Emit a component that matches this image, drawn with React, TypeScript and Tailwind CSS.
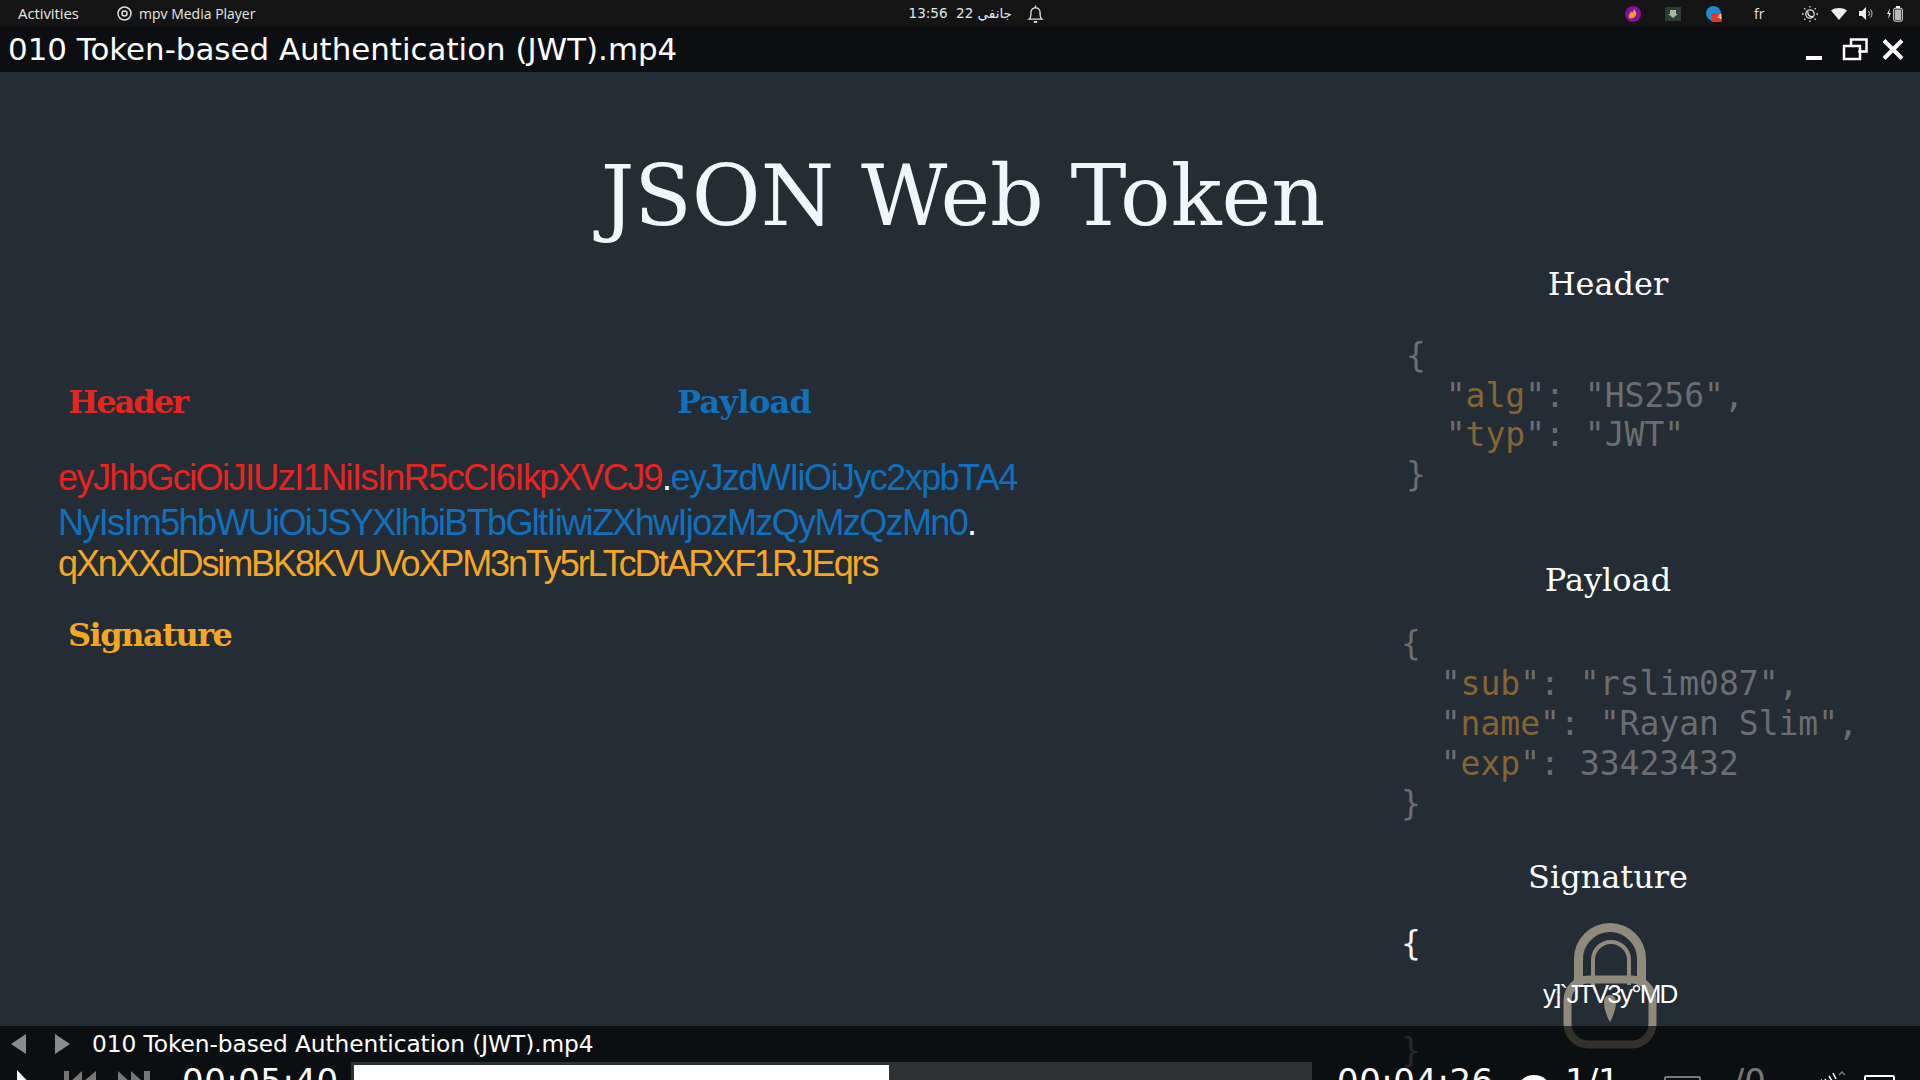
import React from "react";

const mono = "font-['DejaVu_Sans_Mono',monospace]";
const serif = "font-['DejaVu_Serif',serif]";
const sans = "font-['Liberation_Sans',sans-serif]";
const dv = "font-['DejaVu_Sans',sans-serif]";

function K({ children }: { children: React.ReactNode }) {
  return <span className="text-[#846534]">{children}</span>;
}

function Line({ children }: { children: React.ReactNode }) {
  return <div className="whitespace-pre">{children}</div>;
}

function Tray() {
  return (
    <div className="flex items-center">
      <svg width="16" height="16" viewBox="0 0 16 16" className="mr-[24px]">
        <circle cx="8" cy="8" r="8" fill="#8a0e9c" />
        <path d="M4 12c-1-3 1-4 2-7 1 1 1 2 1 2 1-2 2-3 2-4 1 2 3 3 2 6-1 3-5 4-7 3z" fill="#f79a2a" />
      </svg>
      <svg width="16" height="14" viewBox="0 0 16 14" className="mr-[25px]">
        <rect width="16" height="14" fill="#2c3d33" />
        <path d="M5 3h6v4h2l-5 4-5-4h2z" fill="#a9b79f" />
      </svg>
      <div className="relative w-[15px] h-[15px] rounded-full bg-[#1f8ad6] mr-[33px]">
        <div className="absolute right-[-1px] bottom-[-1px] w-[11px] h-[9px] rounded-[2px] bg-[#e0382f] text-[7px] leading-[9px] text-white text-right font-['DejaVu_Sans',sans-serif]">4</div>
      </div>
      <span className="text-[14px] text-[#e4e4e4] w-[12px] mr-[36px] font-['Open_Sans',sans-serif] leading-none">fr</span>
      <svg width="16" height="16" viewBox="0 0 16 16" className="mr-[13px]" fill="none" stroke="#ddd" strokeWidth="1.3">
        <circle cx="8" cy="8" r="4.2" />
        <path d="M6 5.5a4 4 0 0 0 5 5 4.2 4.2 0 0 1-5-5z" fill="#ddd" />
        <path d="M8 0v1.6M8 14.4V16M0 8h1.6M14.4 8H16M2.3 2.3l1.1 1.1M12.6 12.6l1.1 1.1M2.3 13.7l1.1-1.1M12.6 3.4l1.1-1.1" />
      </svg>
      <svg width="16" height="12" viewBox="0 0 16 12" className="mr-[12px]">
        <path d="M0 2.5C4-.8 12-.8 16 2.5L8 12z" fill="#eee" />
      </svg>
      <svg width="15" height="13" viewBox="0 0 15 13" className="mr-[12px]" fill="none">
        <path d="M0 4h3l4-4v13l-4-4H0z" fill="#eee" />
        <path d="M9.5 4a3.5 3.5 0 0 1 0 5M11.5 2.5a6 6 0 0 1 0 8" stroke="#ccc" />
      </svg>
      <svg width="17" height="16" viewBox="0 0 17 16" className="mr-[17px]" fill="none">
        <path d="M4 2 1 8h2l-1 5 3-6H3z" fill="#eee" />
        <rect x="7.7" y="2.2" width="8.6" height="13" rx="1.5" stroke="#eee" />
        <rect x="10" y="0" width="4" height="2" fill="#eee" />
        <rect x="9" y="3.5" width="6" height="10.5" fill="#bbb" />
      </svg>
    </div>
  );
}

function TopBar() {
  return (
    <div className="h-[27px] shrink-0 bg-[#141414] flex items-center relative text-[#e6e6e6] font-['Open_Sans',sans-serif]">
      <span className="ml-[18px] w-[99px] text-[15px] tracking-[-0.1px]">Activities</span>
      <svg width="15" height="15" viewBox="0 0 15 15" className="mr-[7px]" fill="none" stroke="#ddd">
        <circle cx="7.5" cy="7.5" r="6.5" strokeWidth="1.5" />
        <circle cx="7.5" cy="7.5" r="2.5" strokeWidth="1.5" />
      </svg>
      <span className="text-[14px]">mpv Media Player</span>
      <div className="flex-1 flex items-center justify-center">
        <div className="flex items-center ml-[72px]">
          <span className="text-[13.5px] text-[#dfe8f0] font-['DejaVu_Sans',sans-serif] tracking-[-0.95px] whitespace-nowrap">13:56&nbsp; 22 <span dir="rtl">جانفي</span></span>
          <svg width="17" height="20" viewBox="0 0 15 17" className="ml-[15px]" fill="none" stroke="#ddd" strokeWidth="1.2">
            <path d="M2 13c1.5-1 1.5-3 1.5-6a4 4 0 0 1 8 0c0 3 0 5 1.500 6z" />
            <path d="M6 15.500h3" strokeWidth="1.600" />
            <path d="M7.500 1v2" />
          </svg>
        </div>
      </div>
      <Tray />
    </div>
  );
}

function TitleBar() {
  return (
    <div className={`h-[45px] shrink-0 bg-[#0c0e12] flex items-center pl-[8px] pr-[15px] text-white ${dv}`}>
      <span className="text-[30.900px] leading-none flex-1 whitespace-nowrap">010 Token-based Authentication (JWT).mp4</span>
      <svg width="99" height="24" viewBox="-3 0 99 24" fill="none" stroke="#fff">
        <path d="M-3 20h16" strokeWidth="4" />
        <path d="M42 7V1.500h15.500v12h-7" strokeWidth="2.500" strokeLinecap="square" />
        <rect x="35" y="8" width="16" height="13" strokeWidth="2.500" />
        <path d="M75 2.500 93 20.500M93 2.500 75 20.500" strokeWidth="4" />
      </svg>
    </div>
  );
}

function Lock() {
  return (
    <svg width="104" height="130" viewBox="0 0 104 130" fill="none" stroke="#8f8a7c" className="absolute left-[157px] top-[-1px]">
      <path d="M20.5 62V36a31.5 31.5 0 0 1 63 0v26" strokeWidth="9" />
      <path d="M35 62V37a18 18 0 0 1 36 0v25" strokeWidth="4" />
      <rect x="9.500" y="56.500" width="85" height="65" rx="21" strokeWidth="8" />
      <path d="M52 72c5 0 6 4 6 8 0 6-4 16-6 19-2-3-6-13-6-19 0-4 1-8 6-8z" fill="#8f8a7c" stroke="none" />
    </svg>
  );
}

const heading = `${serif} text-[32px] leading-[42px] text-white text-center ml-[-8px]`;

function RightColumn() {
  return (
    <div className={`w-[406px] shrink-0 relative ${mono} text-[33px] leading-[40px] text-[#6a6e72]`}>
      <h2 className={`${heading} mt-[-23px]`}>Header</h2>
      <div className="ml-[-3px] mt-[31px] leading-[39.500px]">
        <Line>{"{"}</Line>
        <Line>{"  \""}<K>alg</K>{"\": \"HS256\","}</Line>
        <Line>{"  \""}<K>typ</K>{"\": \"JWT\""}</Line>
        <Line>{"}"}</Line>
      </div>
      <h2 className={`${heading} mt-[65px]`}>Payload</h2>
      <div className="ml-[-8px] mt-[23px]">
        <Line>{"{"}</Line>
        <Line>{"  \""}<K>sub</K>{"\": \"rslim087\","}</Line>
        <Line>{"  \""}<K>name</K>{"\": \"Rayan Slim\","}</Line>
        <Line>{"  \""}<K>exp</K>{"\": 33423432"}</Line>
        <Line>{"}"}</Line>
      </div>
      <h2 className={`${heading} mt-[32px]`}>Signature</h2>
      <div className="relative ml-[-8px] mt-[26px]">
        <Lock />
        <div className="relative text-[#f2f2f2]">{"{"}</div>
        <div className="relative mt-[67px]">{"}"}</div>
        <span className={`absolute left-[142px] top-[55px] text-[26px] leading-[30px] text-white tracking-[-1.8px] whitespace-nowrap ${sans}`}>{"y]`JTV3y°MD"}</span>
      </div>
    </div>
  );
}

function LeftColumn() {
  return (
    <div className="w-[1000px] pl-[58px] pt-[96px] shrink-0">
      <div className={`flex ${serif} font-bold text-[32px] leading-[40px]`}>
        <span className="text-[#e8241f] ml-[10px] w-[609px] tracking-[-2px]">Header</span>
        <span className="text-[#1170bd] tracking-[-0.7px]">Payload</span>
      </div>
      <div className={`${sans} text-[36px] mt-[35px] whitespace-nowrap`}>
        <div className="leading-[42px] tracking-[-1.56px]">
          <span className="text-[#e8241f]">eyJhbGciOiJIUzI1NiIsInR5cCI6IkpXVCJ9</span>
          <span className="text-white">.</span>
          <span className="text-[#1170bd]">eyJzdWIiOiJyc2xpbTA4</span>
        </div>
        <div className="leading-[42px] mt-[3px] tracking-[-1.63px]">
          <span className="text-[#1170bd]">NyIsIm5hbWUiOiJSYXlhbiBTbGltIiwiZXhwIjozMzQyMzQzMn0</span>
          <span className="text-white">.</span>
        </div>
        <div className="leading-[42px] text-[#f5a623] mt-[-1px] tracking-[-2.1px]">qXnXXdDsimBK8KVUVoXPM3nTy5rLTcDtARXF1RJEqrs</div>
      </div>
      <div className={`${serif} font-bold text-[32px] leading-[40px] tracking-[-1.5px] text-[#f5a623] ml-[10px] mt-[30px]`}>Signature</div>
    </div>
  );
}

function Slide() {
  return (
    <div className="flex-1 min-h-0 bg-[#242c35] flex flex-col">
      <h1 className={`${serif} text-[84px] leading-[96px] text-[#eff6ff] text-center mt-[76px] ml-[6px] shrink-0`}>JSON Web Token</h1>
      <div className="flex justify-between items-start pr-[105px] pt-[42px]">
        <LeftColumn />
        <RightColumn />
      </div>
    </div>
  );
}

function Controls() {
  return (
    <div className={`relative z-10 h-[54px] shrink-0 overflow-hidden bg-black/65 ${dv} text-white`}>
      <div className="h-[36px] flex items-center">
        <svg width="60" height="20" viewBox="0 0 60 20" fill="#8b8b8b" className="ml-[11px] mr-[21px]">
          <path d="M0 10 15 0v20zM44 0l15 10-15 10z" />
        </svg>
        <span className="text-[23.300px] leading-none tracking-[-0.08px] whitespace-nowrap">010 Token-based Authentication (JWT).mp4</span>
      </div>
      <div className="h-[30px] flex items-start">
        <svg width="170" height="30" viewBox="0 0 170 30" className="shrink-0">
          <path d="M17 8 36 28H17z" fill="#fff" />
          <path d="M64 9h5v21h-5zM70 20l12-11v21zM83 20l13-11v21zM118 9l12 11-12 10zM131 9l12 11-12 10zM144 9h6v21h-6z" fill="#777" />
        </svg>
        <span className="text-[34px] leading-[38px] w-[181px] pl-[12px] shrink-0 tracking-[0.5px]">00:05:40</span>
        <div className="w-[961px] h-[30px] bg-[#2d3133] pl-[3px] pt-[3px] shrink-0">
          <div className="w-[535px] h-[30px] bg-white" />
        </div>
        <span className="text-[34px] leading-[38px] ml-[25px] w-[179px] shrink-0 tracking-[0.5px]">00:04:26</span>
        <div className="w-[36px] h-[36px] mt-[13px] rounded-full bg-white shrink-0" />
        <span className="text-[34px] leading-[38px] ml-[13px] shrink-0">1/1</span>
        <div className="w-[37px] h-[20px] mt-[14px] ml-[44px] rounded-[2px] border-2 border-[#777] shrink-0" />
        <span className="text-[34px] leading-[38px] ml-[32px] text-[#777] shrink-0">/0</span>
        <svg width="40" height="18" viewBox="0 0 40 18" className="ml-[42px] mt-[8px] shrink-0" fill="none">
          <path d="M0 18 14 9v9z" fill="#fff" />
          <path d="M17 9l2 3M21 6l3 5M25 3l3 6" stroke="#fff" strokeWidth="1.500" />
          <path d="M31 5l3-3 3 3" stroke="#777" strokeWidth="1.500" />
        </svg>
        <div className="w-[31px] h-[20px] mt-[13px] ml-[16px] rounded-[2px] border-2 border-white shrink-0" />
      </div>
    </div>
  );
}

export default function App() {
  return (
    <div className="w-[1920px] h-screen overflow-hidden flex flex-col bg-[#242c35]">
      <TopBar />
      <TitleBar />
      <Slide />
      <Controls />
    </div>
  );
}
